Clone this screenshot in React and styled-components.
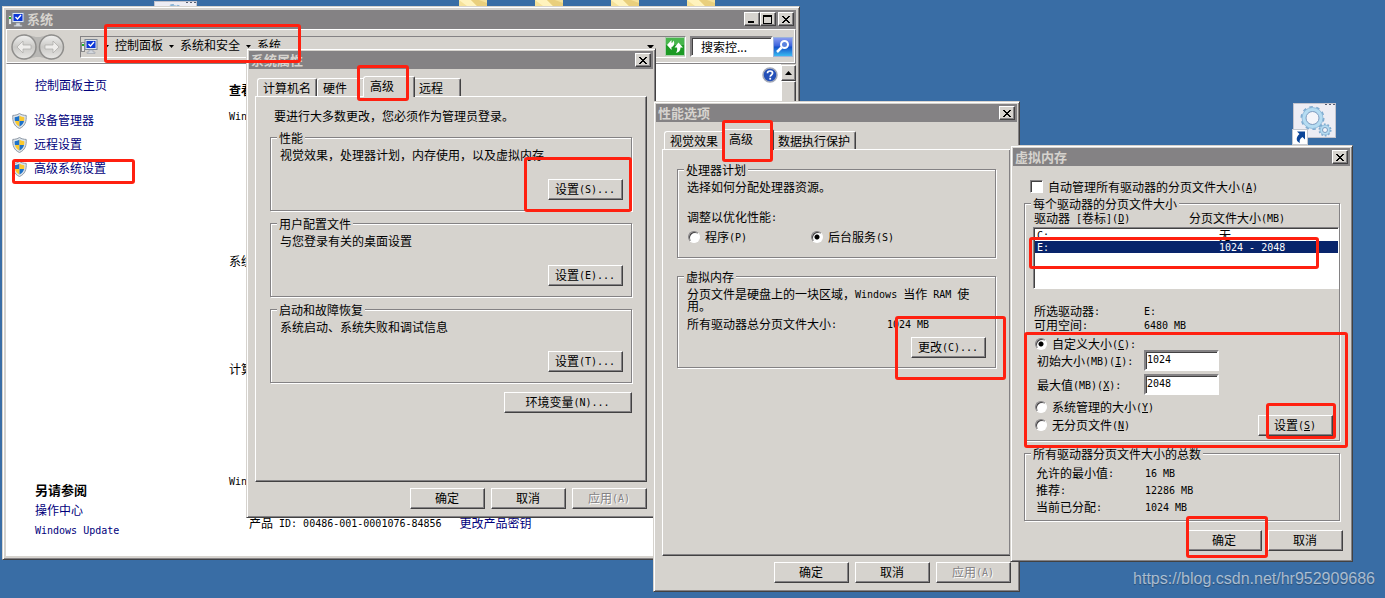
import React from 'react';
import styled, { createGlobalStyle, css } from 'styled-components';

const FACE = '#d6d3ce';
const SHADE = '#848284';
const DARK = '#424142';
const NAVY = '#00007b';

const GlobalStyle = createGlobalStyle`
  * {
    box-sizing: border-box;
  }

  body {
    margin: 0;
    background: #396da5;
  }

  body, button, input, table {
    font-family: "Noto Sans CJK SC", sans-serif;
    font-size: 12px;
    line-height: 12px;
    color: #000;
  }

  p, h2, h3, ul {
    margin: 0;
    padding: 0;
    font-size: 12px;
  }
`;

const Latin = styled.span`
  font-family: "DejaVu Sans Mono", monospace;
  font-size: 10px;
  line-height: 0;
  vertical-align: 1px;
  white-space: pre-wrap;
`;

// Latin runs get the half-width face, "&X" underlines the accelerator key
const T = ({ children }) =>
  children.split(/([ -~]+)/).map((run, i) => {
    if (i % 2 === 0) return run;
    return (
      <Latin key={i}>
        {run.split(/&(\w)/).map((part, j) => (j % 2 ? <u key={j}>{part}</u> : part))}
      </Latin>
    );
  });

const Desktop = styled.div`
  position: relative;
  min-height: 100vh;
  overflow: hidden;
  background: #396da5;
`;

const raised = css`
  border: 1px solid;
  border-color: #fff ${DARK} ${DARK} #fff;
  box-shadow: inset -1px -1px 0 ${SHADE};
  background: ${FACE};
`;

const sunken = css`
  border: 2px solid;
  border-color: ${SHADE} #fff #fff ${SHADE};
  box-shadow: inset 1px 1px 0 ${DARK};
`;

const Window = styled.section`
  position: absolute;
  left: ${props => props.$x}px;
  top: ${props => props.$y}px;
  width: ${props => props.$w}px;
  padding: ${props => (props.$frame || 3) - 1}px;
  border: 1px solid;
  border-color: ${FACE} ${DARK} ${DARK} ${FACE};
  box-shadow: inset 1px 1px 0 #fff, inset -1px -1px 0 ${SHADE};
  background: ${FACE};
`;

const TitleBar = styled.header`
  display: flex;
  align-items: center;
  height: 18px;
  padding: 0 2px;
  background: ${SHADE};
  color: ${FACE};
`;

const Title = styled.h2`
  flex: 1;
  display: flex;
  align-items: center;
  gap: 2px;
  font-size: 13px;
  line-height: 14px;
  font-weight: bold;
`;

const CaptionButton = styled.button`
  ${raised}
  display: flex;
  align-items: center;
  justify-content: center;
  width: 16px;
  height: 14px;
  padding: 0;
  margin-left: ${props => (props.$gap ? 2 : 0)}px;
`;

const Button = styled.button`
  ${raised}
  width: ${props => (props.$wide ? 128 : 75)}px;
  height: 21px;
  padding: 0 1px 1px 0;

  &:disabled {
    color: ${SHADE};
    text-shadow: 1px 1px 0 #fff;
  }
`;

const Toolbar = styled.div`
  display: flex;
  align-items: center;
  height: 35px;
  margin-top: 1px;
  padding: 0 2px 0 4px;
  border: 1px solid;
  border-color: #fff ${SHADE} ${SHADE} #fff;
  box-shadow: 0 -1px 0 ${SHADE}, inset -1px -1px 0 #fff;
`;

const Address = styled.nav`
  flex: 1;
  display: flex;
  align-items: center;
  gap: 6px;
  height: 22px;
  margin: 0 4px 0 15px;
  border: 1px solid;
  border-color: ${SHADE} #fff #fff ${SHADE};
`;

const Crumb = styled.a`
  padding-bottom: 3px;
  color: #000;
  text-decoration: none;
`;

const Spacer = styled.span`
  flex: 1;
`;

const Search = styled.input`
  ${sunken}
  width: 83px;
  height: 21px;
  padding: 0 0 0 9px;
  background: #fff;
  border-radius: 0;

  &::placeholder {
    color: #000;
    opacity: 1;
  }
`;

const IconButton = styled.button`
  display: flex;
  margin-left: ${props => props.$gap || 0}px;
  padding: 0;
  border: 0;
  background: none;
`;

const Explorer = styled.div`
  display: flex;
  min-height: 492px;
  background: #fff;
`;

const Sidebar = styled.aside`
  display: flex;
  flex-direction: column;
  width: 223px;
  padding: 15px 0 20px 29px;
`;

const SideLink = styled.a`
  color: ${NAVY};
  text-decoration: none;
`;

const Tasks = styled.ul`
  flex: 1;
  display: flex;
  flex-direction: column;
  gap: 8px;
  margin: 21px 0 0 -23px;
  list-style: none;

  li {
    display: flex;
    align-items: center;
    gap: 7px;
    height: 16px;
  }

  svg {
    margin-top: 2px;
  }
`;

const SeeAlso = styled.div`
  display: flex;
  flex-direction: column;
  align-items: flex-start;
  gap: 8px;

  h3 {
    font-size: 13px;
  }
`;

const Details = styled.main`
  flex: 1;
  padding-top: 20px;
`;

const Section = styled.section`
  min-height: ${props => props.$h}px;

  h3 + p {
    margin-top: 14px;
  }
`;

const Product = styled.p`
  display: flex;
  gap: 18px;
  padding: 30px 0 0 20px;
`;

const Help = styled.div`
  padding: 3px 3px 0 0;
`;

const Scrollbar = styled.div`
  width: 15px;
  padding-top: 1px;
  display: flex;
  flex-direction: column;
  background: ${FACE};
`;

const ScrollPart = styled.div`
  ${raised}
  flex: ${props => (props.$thumb ? '1' : '0 0 16px')};
  display: flex;
  align-items: center;
  justify-content: center;
`;

const Tabs = styled.div`
  display: flex;
  align-items: flex-end;
  height: 20px;
  margin: 7px 8px 0;
`;

const Tab = styled.button`
  height: 18px;
  min-width: 48px;
  padding: 0 5px;
  border: 1px solid;
  border-color: #fff ${DARK} transparent #fff;
  border-radius: 3px 2px 0 0;
  border-bottom: 0;
  box-shadow: inset -1px 0 0 ${SHADE};
  background: ${FACE};
  text-align: left;

  &[aria-selected="true"] {
    z-index: 1;
    height: 21px;
    min-width: 52px;
    margin: 0 -2px -1px;
    padding: 0 6px 2px;
  }
`;

const Pane = styled.div`
  min-height: ${props => props.$h}px;
  margin: 0 6px;
  padding: 12px 14px 0 14px;
  border: 1px solid;
  border-color: #fff ${DARK} ${DARK} #fff;
  box-shadow: inset -1px -1px 0 ${SHADE};
`;

const Footer = styled.footer`
  display: flex;
  justify-content: flex-end;
  gap: 6px;
  padding: ${props => (props.$tall ? '9px 7px 8px' : '6px')};
`;

const Intro = styled.p`
  padding: 1px 0 0 4px;
  margin-bottom: 8px;
`;

const Group = styled.fieldset`
  min-width: 0;
  margin: ${props => props.$mt || 0}px 0 0;
  padding: ${props => props.$pad || '4px 8px 10px 9px'};
  border: 1px solid ${SHADE};
  box-shadow: 1px 1px 0 #fff, inset 1px 1px 0 #fff;

  legend {
    height: 15px;
    margin-left: ${props => props.$legend || 0}px;
    padding: 2px 2px 0;
    background: ${FACE};
  }
`;

const Actions = styled.div`
  display: flex;
  justify-content: flex-end;
  margin-top: ${props => props.$mt}px;
`;

const Text = styled.p`
  margin-top: ${props => props.$mt || 0}px;
  max-width: 290px;
`;

const Facts = styled.dl`
  display: grid;
  grid-template-columns: ${props => props.$col}px 1fr;
  row-gap: ${props => props.$gap || 0}px;
  margin: ${props => props.$mt || 0}px 0 0;

  dd {
    margin: 0;
  }
`;

const Choices = styled.div`
  display: flex;
  flex-direction: ${props => (props.$column ? 'column' : 'row')};
  gap: 6px;
  margin: ${props => props.$mt || 0}px 0 0 1px;
`;

const Choice = styled.label`
  display: flex;
  align-items: center;
  gap: 5px;
  min-width: ${props => props.$w || 0}px;
  height: 12px;
`;

const Radio = styled.input.attrs({ type: 'radio' })`
  appearance: none;
  width: 12px;
  height: 12px;
  margin: 0;
  border: 1px solid;
  border-color: ${SHADE} #fff #fff ${SHADE};
  border-radius: 50%;
  box-shadow: inset 1px 1px 0 ${DARK};
  background: #fff;

  &:checked {
    background: radial-gradient(circle, #000 2px, #fff 3px);
  }
`;

const Checkbox = styled.input.attrs({ type: 'checkbox' })`
  appearance: none;
  width: 13px;
  height: 13px;
  margin: 0;
  border: 1px solid;
  border-color: ${SHADE} #fff #fff ${SHADE};
  box-shadow: inset 1px 1px 0 ${DARK};
  background: #fff;
`;

const AutoManage = styled.label`
  display: flex;
  align-items: center;
  gap: 5px;
  margin: 14px 0 3px 17px;
`;

const MemoryBody = styled.div`
  margin: 0 10px 0 11px;
`;

const ListBox = styled.div`
  height: 62px;
  margin: 3px 0 0 -1px;
  border: 1px solid;
  border-color: ${SHADE} transparent #fff ${SHADE};
  box-shadow: inset 1px 1px 0 ${DARK};
  padding: 1px 0 0 1px;
  background: #fff;
`;

const DriveHeads = styled.div`
  display: grid;
  grid-template-columns: 155px 1fr;
`;

const Drives = styled.table`
  width: 100%;
  border-collapse: collapse;

  td {
    height: 12px;
    padding: 0 2px;
  }

  td:first-child {
    width: 182px;
  }

  tr[aria-selected="true"] td {
    background: #08246b;
    color: #fff;
  }
`;

const Sizes = styled.div`
  display: grid;
  grid-template-columns: 107px 75px;
  row-gap: 3px;
  align-items: center;
  padding-left: 3px;
`;

const SizeInput = styled.input`
  ${sunken}
  height: 21px;
  width: 100%;
  padding: 0 0 2px 1px;
  background: #fff;
  font-family: "DejaVu Sans Mono", monospace;
  font-size: 10px;
`;

const SetRow = styled.div`
  display: flex;
  justify-content: space-between;
  align-items: flex-end;
  height: 35px;
  margin-top: 6px;
  padding-right: 6px;

  ${Choices} {
    align-self: flex-start;
  }
`;

const DesktopIcon = styled.div`
  position: absolute;
  left: ${props => props.$x}px;
  top: ${props => props.$y}px;

  svg {
    display: block;
  }
`;

const Mark = styled.div`
  position: absolute;
  z-index: 2;
  left: ${props => props.$box[0]}px;
  top: ${props => props.$box[1]}px;
  width: ${props => props.$box[2]}px;
  height: ${props => props.$box[3]}px;
  border: 3px solid #ff2010;
  border-radius: 3px;
  pointer-events: none;
`;

const Watermark = styled.a`
  position: absolute;
  right: 10px;
  bottom: 9px;
  font-family: "Liberation Sans", sans-serif;
  font-size: 16px;
  line-height: 20px;
  color: rgba(255, 255, 255, 0.6);
  text-shadow: 0 1px 1px rgba(0, 0, 0, 0.3);
  text-decoration: none;
`;

const Cross = () => (
  <svg width="8" height="7" viewBox="0 0 8 7" shapeRendering="crispEdges">
    <path d="M0 0h2v1h1v1h2V1h1V0h2v1H7v1H6v1H5v1h1v1h1v1h1v1H6V6H5V5H3v1H2v1H0V6h1V5h1V4h1V3H2V2H1V1H0z" />
  </svg>
);

const Caret = ({ up, wide }) => (
  <svg width={wide ? 7 : 5} height={wide ? 4 : 3} viewBox="0 0 7 4">
    <path d={up ? 'M3.5 0L7 4H0z' : 'M0 0h7L3.5 4z'} />
  </svg>
);

const Computer = () => (
  <svg width="17" height="15" viewBox="0 0 17 15">
    <rect x="0.5" y="3.5" width="3" height="9" fill="#e8e8e8" stroke="#8a8a8a" />
    <rect x="1" y="5" width="2" height="2" fill="#1db321" />
    <rect x="4" y="0.5" width="12" height="10" fill="#dfe5ee" stroke="#7c8796" />
    <rect x="5.5" y="2" width="9" height="7" fill="#0b36d6" />
    <path d="M7.5 5l2 2L13 3" fill="none" stroke="#fff" strokeWidth="1.4" />
    <path d="M8 11h4v2h2v1.5H6V13h2z" fill="#d3d7dd" stroke="#9aa0a8" strokeWidth="0.6" />
  </svg>
);

const Shield = () => (
  <svg width="15" height="16" viewBox="0 0 15 16">
    <path d="M7.5 0.5C5.5 1.8 3 2.4 0.8 2.4c-.4 6 1.2 10.8 6.7 13.1 5.5-2.3 7.1-7.1 6.7-13.1C12 2.4 9.5 1.8 7.5.5z" fill="#dce3ea" stroke="#8d99a6" strokeWidth="1" />
    <path d="M7.5 2.8v5.2H2.9C2.6 6.5 2.6 5.3 2.7 4.2 4.3 4.1 6 3.6 7.5 2.8z" fill="#1d72c9" />
    <path d="M7.5 2.8v5.2h4.6c.3-1.5.3-2.7.2-3.8C10.7 4.1 9 3.6 7.5 2.8z" fill="#fbc92e" />
    <path d="M7.5 8v5.6C5 12.4 3.6 10.6 2.9 8z" fill="#fbc92e" />
    <path d="M7.5 8v5.6c2.5-1.2 3.9-3 4.6-5.6z" fill="#1d72c9" />
  </svg>
);

const Travel = () => (
  <svg width="54" height="28" viewBox="0 0 54 28">
    <defs>
      <linearGradient id="disc" x1="0" y1="0" x2="0" y2="1">
        <stop offset="0" stopColor="#f1f1f0" />
        <stop offset="0.5" stopColor="#c9c8c5" />
        <stop offset="1" stopColor="#e9e8e6" />
      </linearGradient>
    </defs>
    <path d="M13 1.5C19 1.5 21 4 27 4s8-2.5 14-2.5v25C35 26.5 33 24 27 24s-8 2.5-14 2.5z" fill="#b9b8b5" />
    <circle cx="13" cy="14" r="12" fill="url(#disc)" stroke="#8f8e8c" strokeWidth="1.5" />
    <circle cx="40.5" cy="14" r="12" fill="url(#disc)" stroke="#8f8e8c" strokeWidth="1.5" />
    <path d="M6 14l6-6v4h8v4h-8v4z" fill="#eeedeb" stroke="#aaa9a6" strokeWidth="0.7" />
    <path d="M48 14l-6-6v4h-8v4h8v4z" fill="#eeedeb" stroke="#aaa9a6" strokeWidth="0.7" />
  </svg>
);

const Refresh = () => (
  <svg width="20" height="19" viewBox="0 0 20 19">
    <rect x="0.5" y="0.5" width="19" height="18" fill="#1c9a24" stroke="#a9cfab" />
    <rect x="1" y="1" width="18" height="7" fill="#48b64d" />
    <path d="M2 8l4.5-5v3C7.5 6 8 5 8.5 3.5c1.5 2.5.5 6-2 6.5v3z" fill="#fff" />
    <path d="M13.5 5.5l4.500 5h-2.500c0 3-1.500 5-4.500 5.500 1-1.500 1.500-3.500 1-5.500H9.500z" fill="#fff" />
  </svg>
);

const Magnifier = () => (
  <svg width="20" height="20" viewBox="0 0 20 20">
    <defs>
      <linearGradient id="lens" x1="0" y1="0" x2="0" y2="1">
        <stop offset="0" stopColor="#8f9ff0" />
        <stop offset="0.45" stopColor="#3a63dc" />
        <stop offset="0.5" stopColor="#1450c8" />
        <stop offset="1" stopColor="#3cc0f4" />
      </linearGradient>
    </defs>
    <rect x="0.5" y="0.5" width="19" height="19" fill="url(#lens)" stroke="#9db4dc" />
    <circle cx="11.5" cy="7.5" r="3.5" fill="#5b83df" stroke="#fff" strokeWidth="2" />
    <path d="M8.5 10.5L4 15" stroke="#fff" strokeWidth="2.5" />
  </svg>
);

const Question = () => (
  <svg width="16" height="16" viewBox="0 0 16 16">
    <circle cx="8" cy="8" r="7" fill="#2450b8" stroke="#a3a9b8" strokeWidth="1.5" />
    <path d="M5.5 6.3C5.5 3.2 10.6 3.3 10.6 6.1c0 1.9-2.4 1.8-2.4 3.6" fill="none" stroke="#fff" strokeWidth="1.7" />
    <rect x="7.3" y="10.8" width="1.8" height="1.8" fill="#fff" />
  </svg>
);

const Cog = ({ cx, cy, r, hole }) => (
  <g>
    <circle cx={cx} cy={cy} r={r} fill="none" stroke="#7eabd0" strokeWidth="3" strokeDasharray={`${r * 0.314} ${r * 0.314}`} />
    <circle cx={cx} cy={cy} r={r} fill="#b5dcf2" stroke="#8ab5d6" strokeWidth="0.8" />
    <circle cx={cx} cy={cy} r={hole} fill="#f4f5fa" stroke="#7d9cc0" />
  </g>
);

const BatchFile = ({ shortcut }) => (
  <svg width="45" height="43" viewBox="0 0 45 43">
    <rect x="1.5" y="0.5" width="42" height="34" fill="#ededf4" stroke="#c3c3cc" />
    <path d="M33 1.5h2m2 0h2m2 0h2" stroke="#555d70" />
    <Cog cx={20.5} cy={15} r={10.5} hole={6.5} />
    <Cog cx={33} cy={27} r={5} hole={2.5} />
    {shortcut && (
      <g>
        <rect x="0.5" y="26.5" width="15" height="15" fill="#fff" stroke="#c3c8d0" />
        <path d="M5 28.5h8v8L10.5 34C8 35.5 7 37.5 8 40 4 38.5 3.5 34.5 7.5 31z" fill="#0b4598" />
      </g>
    )}
  </svg>
);

const Folder = () => (
  <svg width="28" height="6" viewBox="0 0 28 6">
    <rect width="28" height="6" fill="#f6e29a" />
    <path d="M0 0h12l6 6H8z" fill="#fff3bd" />
    <path d="M12 0l6 6h10V3L20 0z" fill="#e9cf7d" />
  </svg>
);

const folders = [459, 535, 611, 687];

const tasks = ['设备管理器', '远程设置', '高级系统设置'];

const settingGroups = [
  { title: '性能', text: '视觉效果，处理器计划，内存使用，以及虚拟内存', button: '设置(S)...' },
  { title: '用户配置文件', text: '与您登录有关的桌面设置', button: '设置(E)...' },
  { title: '启动和故障恢复', text: '系统启动、系统失败和调试信息', button: '设置(T)...' },
];

const totals = [
  ['允许的最小值:', '16 MB'],
  ['推荐:', '12286 MB'],
  ['当前已分配:', '1024 MB'],
];

const marks = [
  [104, 24, 197, 39],
  [12, 159, 123, 25],
  [357, 65, 52, 36],
  [524, 157, 108, 55],
  [722, 120, 51, 42],
  [895, 316, 111, 64],
  [1029, 237, 290, 32],
  [1024, 332, 324, 116],
  [1266, 403, 70, 36],
  [1186, 516, 82, 42],
];

const CloseButton = ({ gap }) => (
  <CaptionButton $gap={gap} aria-label="关闭">
    <Cross />
  </CaptionButton>
);

const TabStrip = ({ items, active }) => (
  <Tabs role="tablist">
    {items.map(item => (
      <Tab key={item} role="tab" aria-selected={item === active}>{item}</Tab>
    ))}
  </Tabs>
);

const SheetFooter = () => (
  <Footer>
    <Button>确定</Button>
    <Button>取消</Button>
    <Button disabled><T>应用(A)</T></Button>
  </Footer>
);

const SystemWindow = () => (
  <Window $x={2} $y={6} $w={798} $frame={4}>
    <TitleBar>
      <Title><Computer />系统</Title>
      <CaptionButton aria-label="最小化">
        <svg width="8" height="8"><rect y="6" width="6" height="2" /></svg>
      </CaptionButton>
      <CaptionButton aria-label="最大化">
        <svg width="10" height="9" shapeRendering="crispEdges"><path d="M0 0h9v9H0zM1 2v6h7V2z" fillRule="evenodd" /></svg>
      </CaptionButton>
      <CloseButton gap />
    </TitleBar>
    <Toolbar>
      <Travel />
      <Address>
        <Computer />
        <Caret />
        <Crumb href="#panel">控制面板</Crumb>
        <Caret />
        <Crumb href="#security">系统和安全</Crumb>
        <Caret />
        <Crumb href="#system">系统</Crumb>
        <Spacer />
        <Caret wide />
        <IconButton $gap={5} aria-label="刷新"><Refresh /></IconButton>
      </Address>
      <Search placeholder="搜索控..." aria-label="搜索控制面板" />
      <IconButton aria-label="搜索"><Magnifier /></IconButton>
    </Toolbar>
    <Explorer>
      <Sidebar>
        <SideLink href="#home">控制面板主页</SideLink>
        <Tasks>
          {tasks.map(task => (
            <li key={task}>
              <Shield />
              <SideLink href="#task">{task}</SideLink>
            </li>
          ))}
        </Tasks>
        <SeeAlso>
          <h3>另请参阅</h3>
          <SideLink href="#action">操作中心</SideLink>
          <SideLink href="#update"><T>Windows Update</T></SideLink>
        </SeeAlso>
      </Sidebar>
      <Details>
        <Section $h={171}>
          <h3>查看有关计算机的基本信息</h3>
          <p><T>Windows 版本</T></p>
        </Section>
        <Section $h={108}>系统</Section>
        <Section $h={112}>计算机名称、域和工作组设置</Section>
        <Section>
          <p><T>Windows 激活</T></p>
          <Product>
            <span><T>产品 ID: 00486-001-0001076-84856</T></span>
            <SideLink href="#key">更改产品密钥</SideLink>
          </Product>
        </Section>
      </Details>
      <Help><Question /></Help>
      <Scrollbar>
        <ScrollPart><Caret up wide /></ScrollPart>
        <ScrollPart $thumb />
      </Scrollbar>
    </Explorer>
  </Window>
);

const SystemProperties = () => (
  <Window $x={246} $y={48} $w={410}>
    <TitleBar>
      <Title>系统属性</Title>
      <CloseButton />
    </TitleBar>
    <TabStrip items={['计算机名', '硬件', '高级', '远程']} active="高级" />
    <Pane $h={386}>
      <Intro>要进行大多数更改，您必须作为管理员登录。</Intro>
      {settingGroups.map((group, i) => (
        <Group key={group.title} $mt={i ? 5 : 0} $legend={-3}>
          <legend>{group.title}</legend>
          <Text>{group.text}</Text>
          <Actions $mt={18}>
            <Button><T>{group.button}</T></Button>
          </Actions>
        </Group>
      ))}
      <Actions $mt={9}>
        <Button $wide><T>环境变量(N)...</T></Button>
      </Actions>
    </Pane>
    <SheetFooter />
  </Window>
);

const PerformanceOptions = () => (
  <Window $x={653} $y={101} $w={367}>
    <TitleBar>
      <Title>性能选项</Title>
      <CloseButton />
    </TitleBar>
    <TabStrip items={['视觉效果', '高级', '数据执行保护']} active="高级" />
    <Pane $h={407}>
      <Group $pad="4px 9px 14px" $legend={-3}>
        <legend>处理器计划</legend>
        <Text>选择如何分配处理器资源。</Text>
        <Text $mt={18}><T>调整以优化性能:</T></Text>
        <Choices $mt={8}>
          <Choice $w={117}><Radio name="plan" /><span><T>程序(P)</T></span></Choice>
          <Choice><Radio name="plan" defaultChecked /><span><T>后台服务(S)</T></span></Choice>
        </Choices>
      </Group>
      <Group $mt={11} $pad="4px 9px 9px" $legend={-3}>
        <legend>虚拟内存</legend>
        <Text><T>分页文件是硬盘上的一块区域，Windows 当作 RAM 使用。</T></Text>
        <Facts $col={200} $mt={6}>
          <dt><T>所有驱动器总分页文件大小:</T></dt>
          <dd><T>1024 MB</T></dd>
        </Facts>
        <Actions $mt={7}>
          <Button><T>更改(C)...</T></Button>
        </Actions>
      </Group>
    </Pane>
    <SheetFooter />
  </Window>
);

const VirtualMemory = () => (
  <Window $x={1010} $y={145} $w={343}>
    <TitleBar>
      <Title>虚拟内存</Title>
      <CloseButton />
    </TitleBar>
    <AutoManage>
      <Checkbox />
      <span><T>自动管理所有驱动器的分页文件大小(&A)</T></span>
    </AutoManage>
    <MemoryBody>
      <Group $pad="1px 0 4px 9px" $legend={-3}>
        <legend>每个驱动器的分页文件大小</legend>
        <DriveHeads>
          <span><T>驱动器 [卷标](&D)</T></span>
          <span><T>分页文件大小(MB)</T></span>
        </DriveHeads>
        <ListBox>
          <Drives>
            <tbody>
              <tr>
                <td><T>C:</T></td>
                <td>无</td>
              </tr>
              <tr aria-selected="true">
                <td><T>E:</T></td>
                <td><T>1024 - 2048</T></td>
              </tr>
            </tbody>
          </Drives>
        </ListBox>
        <Facts $col={110} $gap={2} $mt={16}>
          <dt><T>所选驱动器:</T></dt>
          <dd><T>E:</T></dd>
          <dt><T>可用空间:</T></dt>
          <dd><T>6480 MB</T></dd>
        </Facts>
        <Choices $mt={7}>
          <Choice><Radio name="size" defaultChecked /><span><T>自定义大小(&C):</T></span></Choice>
        </Choices>
        <Sizes>
          <label htmlFor="initial"><T>初始大小(MB)(&I):</T></label>
          <SizeInput id="initial" defaultValue="1024" />
          <label htmlFor="maximum"><T>最大值(MB)(&X):</T></label>
          <SizeInput id="maximum" defaultValue="2048" />
        </Sizes>
        <SetRow>
          <Choices $column>
            <Choice><Radio name="size" /><span><T>系统管理的大小(&Y)</T></span></Choice>
            <Choice><Radio name="size" /><span><T>无分页文件(&N)</T></span></Choice>
          </Choices>
          <Button><T>设置(&S)</T></Button>
        </SetRow>
      </Group>
      <Group $mt={5} $pad="6px 9px 7px 11px" $legend={-5}>
        <legend>所有驱动器分页文件大小的总数</legend>
        <Facts $col={109} $gap={5}>
          {totals.map(([name, value]) => (
            <React.Fragment key={name}>
              <dt><T>{name}</T></dt>
              <dd><T>{value}</T></dd>
            </React.Fragment>
          ))}
        </Facts>
      </Group>
    </MemoryBody>
    <Footer $tall>
      <Button>确定</Button>
      <Button>取消</Button>
    </Footer>
  </Window>
);

const App = () => {
  return (
    <Desktop>
      <GlobalStyle />
      <DesktopIcon $x={153} $y={1}><BatchFile /></DesktopIcon>
      {folders.map(x => (
        <DesktopIcon key={x} $x={x} $y={0}><Folder /></DesktopIcon>
      ))}
      <DesktopIcon $x={1292} $y={103}><BatchFile shortcut /></DesktopIcon>
      <SystemWindow />
      <SystemProperties />
      <PerformanceOptions />
      <VirtualMemory />
      {marks.map(box => (
        <Mark key={box.join()} $box={box} />
      ))}
      <Watermark href="https://blog.csdn.net/hr952909686">https://blog.csdn.net/hr952909686</Watermark>
    </Desktop>
  );
};

export default App;
